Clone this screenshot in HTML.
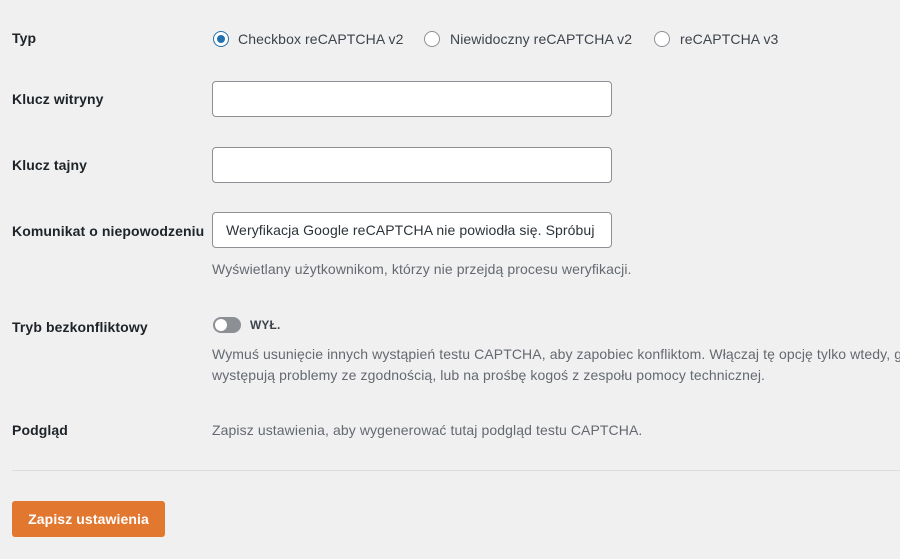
<!DOCTYPE html>
<html><head><meta charset="utf-8"><style>
body{margin:0;width:900px;height:559px;background:#f0f0f1;font-family:"Liberation Sans",sans-serif;font-size:14px;color:#3c434a;position:relative;overflow:hidden;letter-spacing:0.1px}
.a{position:absolute;white-space:nowrap}
.l{font-weight:bold;color:#1d2327}
.in{position:absolute;left:212px;width:400px;height:36px;background:#fff;border:1px solid #8c8f94;border-radius:4px;box-sizing:border-box}
.r{position:absolute;width:16px;height:16px;border:1px solid #8c8f94;border-radius:50%;background:#fff;box-sizing:border-box}
.d{color:#646970}
</style></head><body>
<div class="a l" style="left:12px;top:30px">Typ</div>
<div class="r" style="left:213px;top:31px;border-color:#2271b1"><div style="position:absolute;left:3px;top:3px;width:8px;height:8px;border-radius:50%;background:#2271b1"></div></div>
<div class="a" style="left:238px;top:31px">Checkbox reCAPTCHA v2</div>
<div class="r" style="left:424px;top:31px"></div>
<div class="a" style="left:450px;top:31px">Niewidoczny reCAPTCHA v2</div>
<div class="r" style="left:654px;top:31px"></div>
<div class="a" style="left:680px;top:31px">reCAPTCHA v3</div>

<div class="a l" style="left:12px;top:91px">Klucz witryny</div>
<div class="in" style="top:81px"></div>
<div class="a l" style="left:12px;top:157px">Klucz tajny</div>
<div class="in" style="top:147px"></div>
<div class="a l" style="left:12px;top:223px">Komunikat o niepowodzeniu</div>
<div class="in" style="top:212px;overflow:hidden;color:#2c3338;padding:9px 0 0 13px;white-space:nowrap"><div style="width:370px;overflow:hidden">Weryfikacja Google reCAPTCHA nie powiodła się. Spróbuj ponownie.</div></div>
<div class="a d" style="left:212px;top:261px">Wyświetlany użytkownikom, którzy nie przejdą procesu weryfikacji.</div>

<div class="a l" style="left:12px;top:319px">Tryb bezkonfliktowy</div>
<div style="position:absolute;left:213px;top:317px;width:28px;height:16px;border-radius:8px;background:#8c8f94"><div style="position:absolute;left:2px;top:2px;width:12px;height:12px;border-radius:50%;background:#fff"></div></div>
<div class="a" style="left:250px;top:318px;font-size:12px;font-weight:bold;color:#3c434a">WYŁ.</div>
<div class="a d" style="left:212px;top:344px;line-height:21px">Wymuś usunięcie innych wystąpień testu CAPTCHA, aby zapobiec konfliktom. Włączaj tę opcję tylko wtedy, gdy<br>występują problemy ze zgodnością, lub na prośbę kogoś z zespołu pomocy technicznej.</div>

<div class="a l" style="left:12px;top:422px">Podgląd</div>
<div class="a d" style="left:212px;top:422px">Zapisz ustawienia, aby wygenerować tutaj podgląd testu CAPTCHA.</div>
<div style="position:absolute;left:12px;top:470px;width:888px;height:1px;background:#dcdcde"></div>
<div style="position:absolute;left:12px;top:501px;width:153px;height:36px;background:#e27730;border-radius:3px;color:#fff;font-weight:bold;text-align:center;line-height:36px">Zapisz ustawienia</div>
</body></html>
